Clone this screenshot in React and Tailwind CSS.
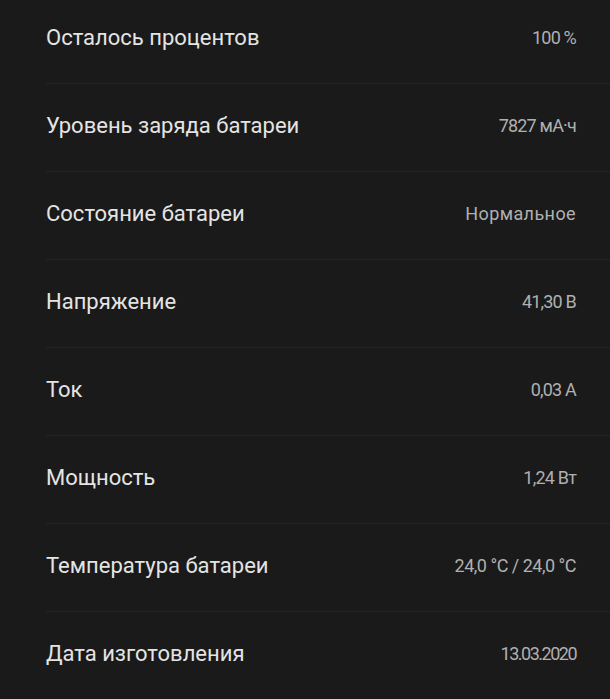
const rows = [
  ['Осталось процентов', '100 %', 'tracking-[-0.8px]'],
  ['Уровень заряда батареи', '7827 мА·ч', 'tracking-[-0.8px]'],
  ['Состояние батареи', 'Нормальное', 'tracking-[0.4px]'],
  ['Напряжение', '41,30 В', 'tracking-[-0.8px]'],
  ['Ток', '0,03 А', 'tracking-[-0.8px]'],
  ['Мощность', '1,24 Вт', 'tracking-[-0.8px]'],
  ['Температура батареи', '24,0 °C / 24,0 °C', 'tracking-[-0.5px]'],
  ['Дата изготовления', '13.03.2020', 'tracking-[-1.5px]'],
]

export default function App() {
  return (
    <div className="w-[610px] h-[699px] overflow-hidden bg-[#1a1a1a]" style={{ fontFamily: 'Roboto, "Noto Sans", sans-serif' }}>
      <div className="-mt-[4px] ml-[46px]">
        {rows.map(([label, value, track]) => (
          <div key={label} className="h-[88px] flex items-center justify-between pr-[34px] pb-[4px] border-b border-[#232323]">
            <span className="text-[22px] text-[#e4e4e4]">{label}</span>
            <span className={`text-[18px] text-[#b0b0b0] ${track}`}>{value}</span>
          </div>
        ))}
      </div>
    </div>
  )
}
